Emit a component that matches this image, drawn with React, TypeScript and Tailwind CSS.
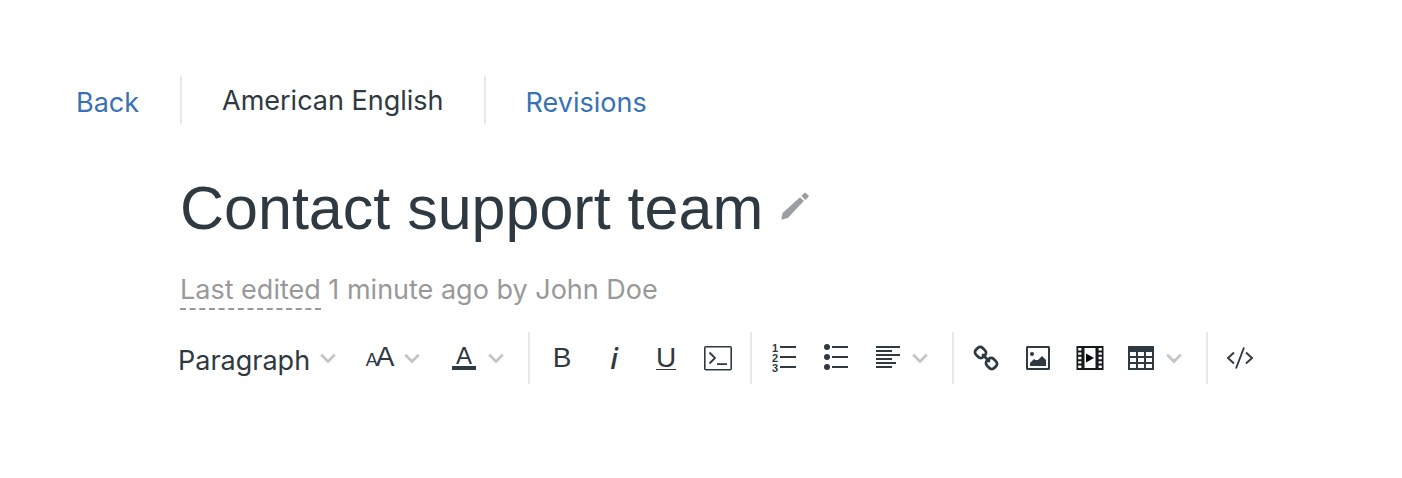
import type { ReactNode } from "react";

function Icon({ children }: { children: ReactNode }) {
  return (
    <svg className="h-7 w-7 shrink-0 overflow-visible" viewBox="0 0 28 28" fill="none" aria-hidden="true">
      {children}
    </svg>
  );
}

function Chevron() {
  return (
    <svg className="h-4 w-4 shrink-0 text-[#c4c5c7]" viewBox="0 0 16 16" fill="none" aria-hidden="true">
      <path d="M2 5.5l6 6 6-6" stroke="currentColor" strokeWidth="2.8" strokeLinecap="round" strokeLinejoin="miter" />
    </svg>
  );
}

function Separator() {
  return <div className="mx-[6px] h-[52px] w-[2px] shrink-0 bg-[#e9e9e9]" />;
}

function ToolButton({ label, children }: { label: string; children: ReactNode }) {
  return (
    <button type="button" aria-label={label} className="flex h-[52px] w-[52px] shrink-0 items-center justify-center">
      {children}
    </button>
  );
}

function MenuButton({ label, children }: { label: string; children: ReactNode }) {
  return (
    <button
      type="button"
      aria-label={label}
      aria-haspopup="menu"
      className="flex h-[52px] w-[84px] shrink-0 items-center gap-[10px] pl-3"
    >
      <span className="flex h-7 w-7 items-center justify-center">{children}</span>
      <Chevron />
    </button>
  );
}

function NumberedListIcon() {
  return (
    <Icon>
      <g className="font-['Liberation_Sans',sans-serif] text-[11px] font-bold" fill="currentColor">
        <text x="2" y="8">1</text>
        <text x="2" y="18">2</text>
        <text x="2" y="28">3</text>
      </g>
      <path d="M10 3h16M10 13h16M10 23h16" stroke="currentColor" strokeWidth="2" />
    </Icon>
  );
}

function BulletListIcon() {
  return (
    <Icon>
      <g fill="currentColor">
        <circle cx="5" cy="3" r="3" />
        <circle cx="5" cy="13" r="3" />
        <circle cx="5" cy="23" r="3" />
      </g>
      <path d="M10 3h16M10 13h16M10 23h16" stroke="currentColor" strokeWidth="2" />
    </Icon>
  );
}

function AlignIcon() {
  return (
    <Icon>
      <path d="M2 3h24M2 7h16M2 11h24M2 15h16M2 19h20M2 23h16" stroke="currentColor" strokeWidth="2" />
    </Icon>
  );
}

function LinkIcon() {
  return (
    <Icon>
      <g stroke="currentColor" strokeWidth="2.8">
        <rect x="3.4" y="3.8" width="10.2" height="9.4" rx="3.4" transform="rotate(45 8.5 8.5)" />
        <rect x="14.4" y="14.8" width="10.2" height="9.4" rx="3.4" transform="rotate(45 19.5 19.5)" />
        <path d="M11 11l6 6" strokeLinecap="round" />
      </g>
    </Icon>
  );
}

function ImageIcon() {
  return (
    <Icon>
      <rect x="3" y="3" width="22" height="22" rx="0.5" stroke="currentColor" strokeWidth="2" />
      <circle cx="8" cy="10" r="2" fill="currentColor" />
      <path d="M6 22v-3l4-4 1.5 1h2.5l4-4 4 4v6z" fill="currentColor" />
    </Icon>
  );
}

function VideoIcon() {
  return (
    <Icon>
      <path d="M0.5 2h27v24H0.5z" fill="#16191c" />
      <path d="M8.5 4h11v20h-11z" fill="#fff" />
      <path
        d="M2.2 4h3.2v2.4H2.2zM2.2 8.4h3.2v2.4H2.2zM2.2 12.8h3.2v2.4H2.2zM2.2 17.2h3.2v2.4H2.2zM2.2 21.6h3.2V24H2.2zM22.6 4h3.2v2.4h-3.2zM22.6 8.4h3.2v2.4h-3.2zM22.6 12.8h3.2v2.4h-3.2zM22.6 17.2h3.2v2.4h-3.2zM22.6 21.6h3.2V24h-3.2z"
        fill="#fff"
      />
      <path d="M10 9.5l8 4.5-8 4.5z" fill="#000" />
    </Icon>
  );
}

function TableIcon() {
  return (
    <Icon>
      <rect x="0" y="2" width="26" height="24" rx="0.5" fill="currentColor" />
      <path
        d="M2 8h6v4H2zM10 8h6v4h-6zM18 8h6v4h-6zM2 14h6v4H2zM10 14h6v4h-6zM18 14h6v4h-6zM2 20h6v4H2zM10 20h6v4h-6zM18 20h6v4h-6z"
        fill="#fff"
      />
    </Icon>
  );
}

function TerminalIcon() {
  return (
    <svg className="h-7 w-[30px] shrink-0" viewBox="0 0 30 28" fill="none" aria-hidden="true">
      <rect x="1.8" y="2.8" width="26.4" height="23" rx="1" stroke="currentColor" strokeWidth="1.6" />
      <path d="M6.5 8.5l5.5 5.5-5.5 5.5M14 20.2h10" stroke="currentColor" strokeWidth="1.8" />
    </svg>
  );
}

function CodeIcon() {
  return (
    <Icon>
      <path d="M8 8.5L2 14l6 5.5M20 8.5l6 5.5-6 5.5M18 3.5l-8 21" stroke="currentColor" strokeWidth="1.9" />
    </Icon>
  );
}

function PencilIcon() {
  return (
    <svg className="h-7 w-7 text-[#9a9da3]" viewBox="0 0 28 28" fill="currentColor" aria-hidden="true">
      <path d="M0.3 27.7l1.3-6.6L19 5.2l3.8 3.8L6.8 26z" />
      <path d="M20.4 3.9l2.9-3a1 1 0 0 1 1.4 0l2.7 2.7a1 1 0 0 1 0 1.4l-3 2.9z" />
    </svg>
  );
}

export default function App() {
  return (
    <main className="min-h-screen bg-white pt-[76px] font-['Inter',sans-serif] text-[27px] leading-8 text-[#2f3941]">
      <nav className="flex h-12 items-center pl-[76px]">
        <a href="#back" className="w-[104px] pt-[6px] text-[#3872b4]">Back</a>
        <span className="flex h-12 items-center border-x-2 border-[#e9e9e9] px-10 pt-[2px]">American English</span>
        <a href="#revisions" className="px-10 pt-[6px] text-[#3872b4]">Revisions</a>
      </nav>

      <header className="pl-[180px] pt-11">
        <div className="flex items-center gap-[18px]">
          <h1 className="font-['Liberation_Sans',sans-serif] text-[61px] font-normal leading-[80px]">Contact support team</h1>
          <button type="button" aria-label="Edit title" className="pb-1">
            <PencilIcon />
          </button>
        </div>
        <p className="mt-[26px] h-10 text-[#999]">
          <span className="inline-block border-b-2 border-dashed border-[#999] pb-[2px]">Last edited</span> 1 minute ago by John Doe
        </p>
      </header>

      <div role="toolbar" aria-label="Formatting" className="mt-[18px] flex items-center pl-[178px]">
        <label className="relative flex h-[52px] w-[176px] shrink-0 items-center">
          <select aria-label="Text style" className="h-full w-full appearance-none bg-transparent pt-[6px]">
            <option>Paragraph</option>
            <option>Heading 1</option>
            <option>Heading 2</option>
          </select>
          <span className="pointer-events-none absolute right-[18px]">
            <Chevron />
          </span>
        </label>
        <MenuButton label="Font size">
          <span className="flex items-baseline font-['Liberation_Sans',sans-serif] leading-7">
            <span className="-mr-[2px] text-[18px]">A</span>
            <span className="text-[28px]">A</span>
          </span>
        </MenuButton>
        <MenuButton label="Text color">
          <span className="flex w-6 flex-col items-center border-b-4 border-[#2f3941] font-['Liberation_Sans',sans-serif] text-[24px] leading-5">
            A
          </span>
        </MenuButton>

        <Separator />
        <ToolButton label="Bold">
          <span className="font-['Liberation_Sans',sans-serif] text-[28px] leading-7">B</span>
        </ToolButton>
        <ToolButton label="Italic">
          <span className="font-['Open_Sans',sans-serif] text-[28px] font-semibold italic leading-6">i</span>
        </ToolButton>
        <ToolButton label="Underline">
          <span className="flex w-5 justify-center border-b border-[#2f3941] font-['Liberation_Sans',sans-serif] text-[28px] leading-[22px]">U</span>
        </ToolButton>
        <ToolButton label="Code block">
          <TerminalIcon />
        </ToolButton>

        <Separator />
        <ToolButton label="Numbered list">
          <NumberedListIcon />
        </ToolButton>
        <ToolButton label="Bulleted list">
          <BulletListIcon />
        </ToolButton>
        <MenuButton label="Align">
          <AlignIcon />
        </MenuButton>

        <Separator />
        <ToolButton label="Link">
          <LinkIcon />
        </ToolButton>
        <ToolButton label="Image">
          <ImageIcon />
        </ToolButton>
        <ToolButton label="Video">
          <VideoIcon />
        </ToolButton>
        <MenuButton label="Table">
          <TableIcon />
        </MenuButton>

        <Separator />
        <ToolButton label="Source code">
          <CodeIcon />
        </ToolButton>
      </div>
    </main>
  );
}
